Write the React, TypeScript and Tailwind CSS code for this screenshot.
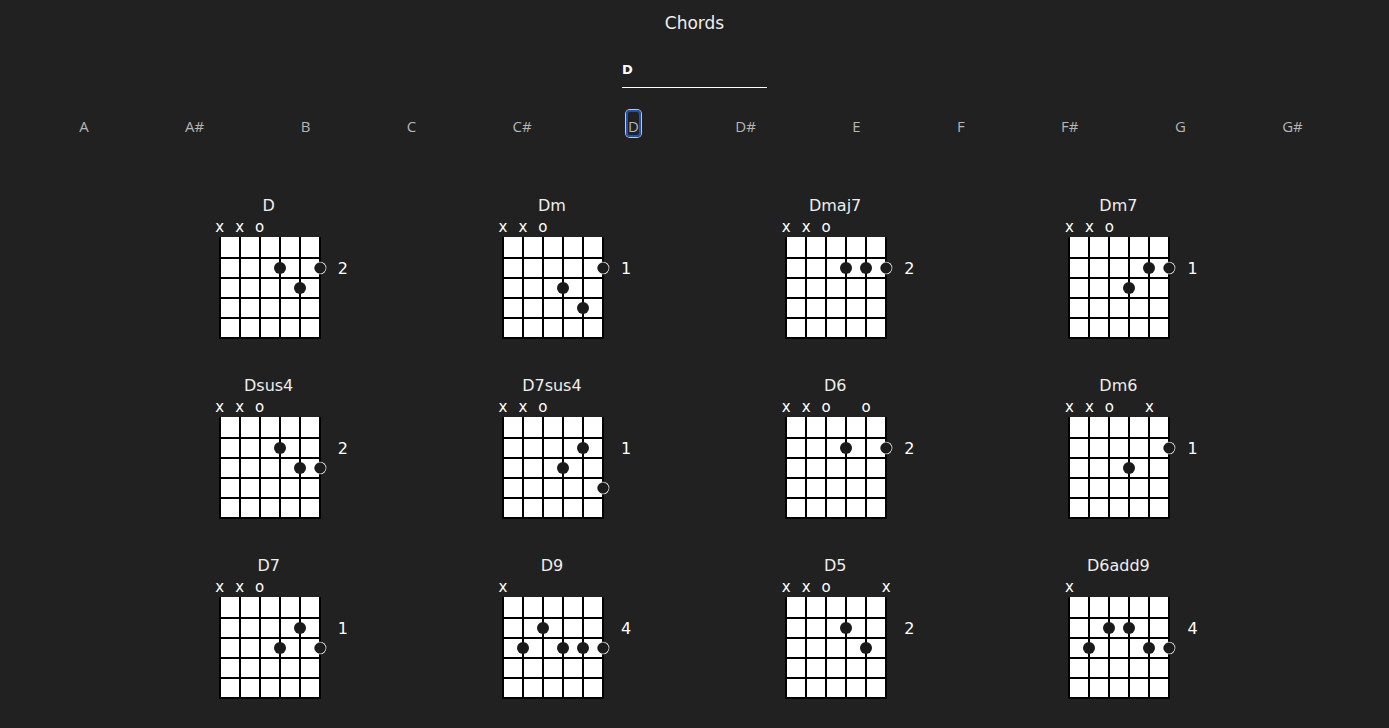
import React, { useState } from 'react';

type Chord = {
  name: string;
  marks: string[]; // one per string, '' for none
  dots: [number, number][]; // [string, row]
  fret: number;
};

const NOTES = ['A', 'A#', 'B', 'C', 'C#', 'D', 'D#', 'E', 'F', 'F#', 'G', 'G#'];

const XXO = ['x', 'x', 'o', '', '', ''];

const CHORDS: Chord[] = [
  { name: 'D', marks: XXO, dots: [[3, 1], [5, 1], [4, 2]], fret: 2 },
  { name: 'Dm', marks: XXO, dots: [[5, 1], [3, 2], [4, 3]], fret: 1 },
  { name: 'Dmaj7', marks: XXO, dots: [[3, 1], [4, 1], [5, 1]], fret: 2 },
  { name: 'Dm7', marks: XXO, dots: [[4, 1], [5, 1], [3, 2]], fret: 1 },
  { name: 'Dsus4', marks: XXO, dots: [[3, 1], [4, 2], [5, 2]], fret: 2 },
  { name: 'D7sus4', marks: XXO, dots: [[4, 1], [3, 2], [5, 3]], fret: 1 },
  { name: 'D6', marks: ['x', 'x', 'o', '', 'o', ''], dots: [[3, 1], [5, 1]], fret: 2 },
  { name: 'Dm6', marks: ['x', 'x', 'o', '', 'x', ''], dots: [[5, 1], [3, 2]], fret: 1 },
  { name: 'D7', marks: XXO, dots: [[4, 1], [3, 2], [5, 2]], fret: 1 },
  { name: 'D9', marks: ['x', '', '', '', '', ''], dots: [[2, 1], [1, 2], [3, 2], [4, 2], [5, 2]], fret: 4 },
  { name: 'D5', marks: ['x', 'x', 'o', '', '', 'x'], dots: [[3, 1], [4, 2]], fret: 2 },
  { name: 'D6add9', marks: ['x', '', '', '', '', ''], dots: [[2, 1], [3, 1], [1, 2], [4, 2], [5, 2]], fret: 4 },
];

const FONT = "font-['DejaVu_Sans',sans-serif]";

const Fretboard: React.FC<{ dots: [number, number][] }> = ({ dots }) => (
  <svg width={102} height={102} viewBox="0 0 102 102" className="overflow-visible block">
    <rect x={1} y={0} width={100} height={101} fill="#ffffff" />
    {[0, 1, 2, 3, 4, 5].map((i) => (
      <line key={'s' + i} x1={1 + i * 20} y1={0} x2={1 + i * 20} y2={102} stroke="#000" strokeWidth={2} />
    ))}
    {[21, 41, 61, 81, 101].map((y) => (
      <line key={'f' + y} x1={0} y1={y} x2={102} y2={y} stroke="#000" strokeWidth={2} />
    ))}
    {dots.map(([s, r], i) =>
      s === 5 ? (
        <g key={i}>
          <circle cx={101} cy={31 + (r - 1) * 20} r={6.3} fill="#ffffff" />
          <circle cx={101} cy={31 + (r - 1) * 20} r={5.3} fill="#1c1c1c" stroke="#000" strokeWidth={0.6} />
        </g>
      ) : (
        <circle key={i} cx={1 + s * 20} cy={31 + (r - 1) * 20} r={6} fill="#1a1a1a" />
      )
    )}
  </svg>
);

const ChordCard: React.FC<{ chord: Chord }> = ({ chord }) => (
  <div className="flex flex-col items-center">
    <div className={`${FONT} text-[16px] leading-[22px] text-[#eeeeee] h-[20px] -ml-[2px]`}>{chord.name}</div>
    <div className="flex w-[120px] mt-[4px] h-[14px]">
      {chord.marks.map((m, i) => (
        <div key={i} className={`${FONT} w-[20px] text-center text-[15px] leading-[16px] text-white`}>
          {m}
        </div>
      ))}
    </div>
    <div className="flex mt-[4px]">
      <div className="w-[40px]" />
      <Fretboard dots={chord.dots} />
      <div className={`${FONT} w-[40px] pl-[17px] pt-[22px] text-[16px] leading-[20px] text-white`}>
        {chord.fret}
      </div>
    </div>
  </div>
);

export default function App() {
  const [root, setRoot] = useState('D');

  return (
    <div className="min-h-[728px] w-full bg-[#212121] text-white overflow-hidden">
      <h1 className={`${FONT} pt-[11px] text-center text-[17px] leading-[24px] text-[#eeeeee]`}>Chords</h1>

      <div className="flex justify-center mt-[27px]">
        <input
          readOnly
          value={root}
          className={`${FONT} w-[145px] h-[26px] pb-[10px] pl-0 border-b border-white bg-transparent text-white text-[13px] font-semibold outline-none`}
        />
      </div>

      <div className="flex justify-around w-[1320px] ml-[31px] mt-[22px]">
        {NOTES.map((n) => (
          <button
            key={n}
            onClick={() => setRoot(n)}
            className={`font-['Open_Sans',sans-serif] h-[27px] text-[15px] leading-[29px] text-[#b5b5b5] ${
              n === root
                ? 'border-2 border-[#1f50b8] rounded-[4px] shadow-[0_0_0_1px_#c9c9c9] px-0'
                : 'border-2 border-transparent'
            }`}
          >
            {n}
          </button>
        ))}
      </div>

      <div className="grid grid-cols-4 w-[1133px] mx-auto mt-[58px] gap-y-[36px]">
        {CHORDS.map((c) => (
          <ChordCard key={c.name} chord={c} />
        ))}
      </div>
    </div>
  );
}
